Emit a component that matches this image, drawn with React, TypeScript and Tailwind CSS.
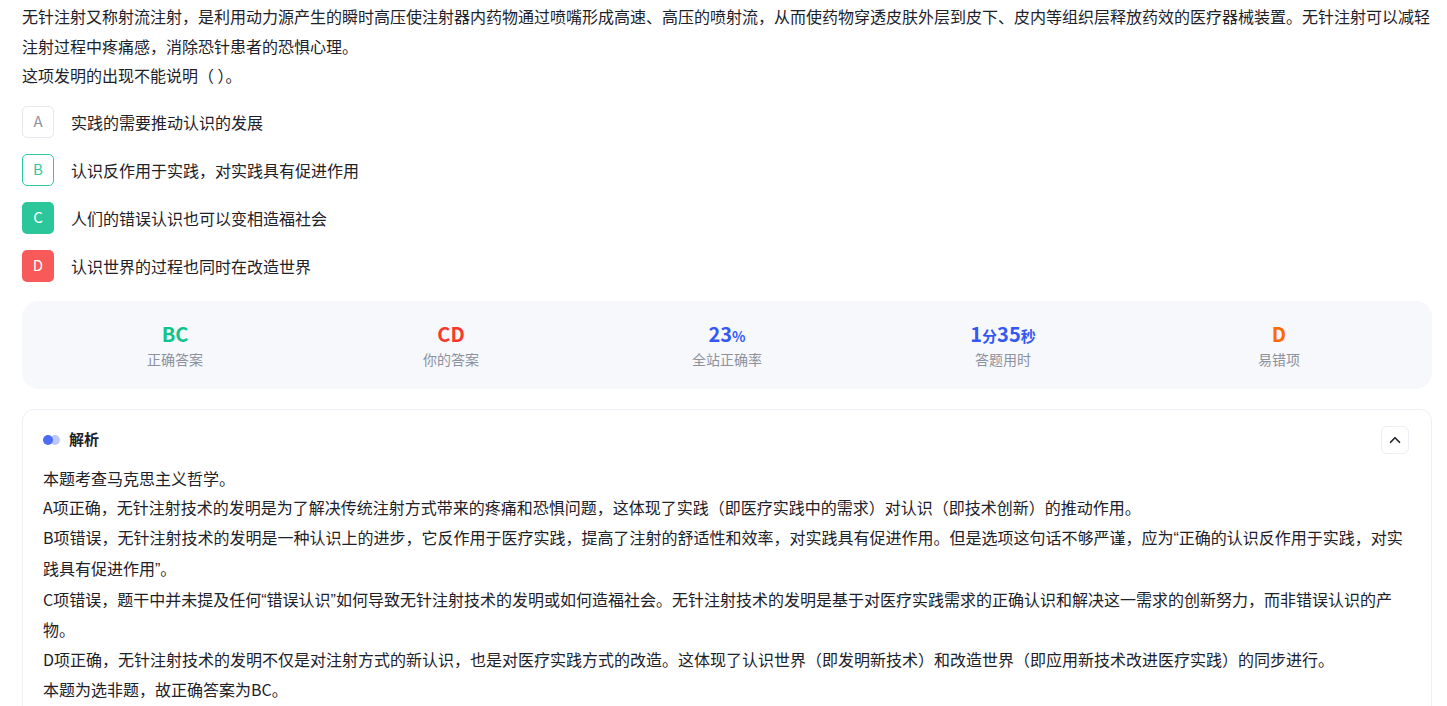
import { ChevronUp } from "lucide-react";

const options = [
  { key: "A", text: "实践的需要推动认识的发展", state: "idle" },
  { key: "B", text: "认识反作用于实践，对实践具有促进作用", state: "missed" },
  { key: "C", text: "人们的错误认识也可以变相造福社会", state: "right" },
  { key: "D", text: "认识世界的过程也同时在改造世界", state: "wrong" },
];

const badgeStyle: Record<string, string> = {
  idle: "border border-[#e6e8ee] text-[#8f94a0] bg-white",
  missed: "border border-[#2ec99e] text-[#2ec99e] bg-white",
  right: "bg-[#2cc69b] text-white",
  wrong: "bg-[#f85a5a] text-white",
};

const analysis = [
  "本题考查马克思主义哲学。",
  "A项正确，无针注射技术的发明是为了解决传统注射方式带来的疼痛和恐惧问题，这体现了实践（即医疗实践中的需求）对认识（即技术创新）的推动作用。",
  "B项错误，无针注射技术的发明是一种认识上的进步，它反作用于医疗实践，提高了注射的舒适性和效率，对实践具有促进作用。但是选项这句话不够严谨，应为“正确的认识反作用于实践，对实践具有促进作用”。",
  "C项错误，题干中并未提及任何“错误认识”如何导致无针注射技术的发明或如何造福社会。无针注射技术的发明是基于对医疗实践需求的正确认识和解决这一需求的创新努力，而非错误认识的产物。",
  "D项正确，无针注射技术的发明不仅是对注射方式的新认识，也是对医疗实践方式的改造。这体现了认识世界（即发明新技术）和改造世界（即应用新技术改进医疗实践）的同步进行。",
  "本题为选非题，故正确答案为BC。",
];

// the source page renders curly quotes half-width
const withQuotes = (line: string) =>
  line.split(/([“”])/).map((part, i) =>
    part === "“" || part === "”" ? (
      <span key={i} className="font-['Liberation_Sans',sans-serif]">
        {part}
      </span>
    ) : (
      part
    )
  );

const StatCell = ({ value, label }: { value: React.ReactNode; label: string }) => (
  <div className="flex flex-col items-center">
    <div className="h-[26px] leading-[26px] text-[20px] font-bold">{value}</div>
    <div className="mt-[2px] text-[14px] leading-[20px] text-[#8c919e]">{label}</div>
  </div>
);

export default function App() {
  return (
    <div className="min-h-screen bg-white font-['Noto_Sans_CJK_SC',sans-serif] text-[#1d2129]">
      <div className="w-[1410px] ml-[22px] pt-[2px]">
        <p className="text-[16px] leading-[29.5px]">
          无针注射又称射流注射，是利用动力源产生的瞬时高压使注射器内药物通过喷嘴形成高速、高压的喷射流，从而使药物穿透皮肤外层到皮下、皮内等组织层释放药效的医疗器械装置。无针注射可以减轻注射过程中疼痛感，消除恐针患者的恐惧心理。
        </p>
        <p className="text-[16px] leading-[29.5px]">这项发明的出现不能说明（ ）。</p>

        <div className="mt-[15px] flex flex-col gap-4">
          {options.map((o) => (
            <div key={o.key} className="flex items-center">
              <div
                className={`flex h-8 w-8 items-center justify-center rounded-[5px] text-[15px] ${badgeStyle[o.state]}`}
              >
                {o.key}
              </div>
              <span className="ml-[17px] text-[16px] leading-6">{o.text}</span>
            </div>
          ))}
        </div>

        <div className="mt-[19px] grid h-[88px] grid-cols-5 items-center rounded-2xl bg-[#f7f8fc] px-[15px]">
          <StatCell value={<span className="text-[#12c28b]">BC</span>} label="正确答案" />
          <StatCell value={<span className="text-[#f5392d]">CD</span>} label="你的答案" />
          <StatCell
            value={
              <span className="text-[#3558f5]">
                23<span className="text-[14px]">%</span>
              </span>
            }
            label="全站正确率"
          />
          <StatCell
            value={
              <span className="text-[#3558f5]">
                1<span className="text-[15px]">分</span>35<span className="text-[15px]">秒</span>
              </span>
            }
            label="答题用时"
          />
          <StatCell value={<span className="text-[#ff6a00]">D</span>} label="易错项" />
        </div>

        <div className="mt-5 rounded-xl border border-[#eef0f5] bg-white pl-5 pr-[28px] pt-[16px] pb-4">
          <div className="mr-[-8px] flex h-[28px] items-center justify-between">
            <div className="flex items-center">
              <div className="relative h-[10px] w-[18px]">
                <span className="absolute left-[7px] top-0 h-[10px] w-[10px] rounded-full bg-[#bcc8fc]" />
                <span className="absolute left-0 top-0 h-[10px] w-[10px] rounded-full bg-[#4d6cf6]" />
              </div>
              <span className="ml-[8px] text-[15px] font-bold">解析</span>
            </div>
            <button className="mr-[2px] flex h-7 w-7 items-center justify-center rounded-md border border-[#eceef4] bg-white">
              <ChevronUp size={18} strokeWidth={2.2} className="text-[#1d2129]" />
            </button>
          </div>
          <div className="mt-[10px] text-[16px] leading-[29.8px]">
            {analysis.map((line, i) => (
              <p key={i}>{withQuotes(line)}</p>
            ))}
          </div>
        </div>
      </div>
    </div>
  );
}
